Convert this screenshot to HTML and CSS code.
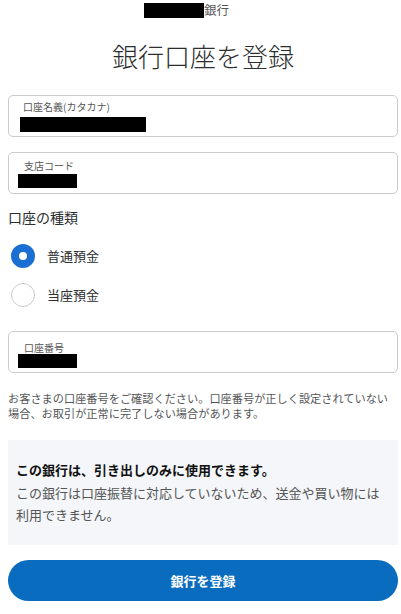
FILE: index.html
```html
<!DOCTYPE html>
<html lang="ja">
<head>
<meta charset="utf-8">
<link rel="stylesheet" href="styles.css">
</head>
<body>
<div class="page">
  <div class="bank"><span class="redact redact-bank"></span>銀行</div>
  <h1 class="title">銀行口座を登録</h1>

  <div class="field field-name">
    <div class="label">口座名義(カタカナ)</div>
    <div class="redact redact-name"></div>
  </div>

  <div class="field field-branch">
    <div class="label">支店コード</div>
    <div class="redact redact-short"></div>
  </div>

  <div class="section-title">口座の種類</div>
  <div class="radios">
    <div class="radio-row">
      <span class="radio radio-on"></span>
      <span class="radio-label">普通預金</span>
    </div>
    <div class="radio-row">
      <span class="radio"></span>
      <span class="radio-label">当座預金</span>
    </div>
  </div>

  <div class="field field-number">
    <div class="label">口座番号</div>
    <div class="redact redact-short"></div>
  </div>

  <p class="note">お客さまの口座番号をご確認ください。口座番号が正しく設定されていない場合、お取引が正常に完了しない場合があります。</p>

  <div class="info">
    <div class="info-head">この銀行は、引き出しのみに使用できます。</div>
    <div class="info-body">この銀行は口座振替に対応していないため、送金や買い物には利用できません。</div>
  </div>

  <button class="submit">銀行を登録</button>
</div>
</body>
</html>
```

FILE: styles.css
```css
* { box-sizing: border-box; }
html, body { margin: 0; padding: 0; background: #fff; overflow: hidden; }
body {
  font-family: "Noto Sans CJK JP", "Noto Sans", sans-serif;
  color: #2c2e2f;
}
.page {
  padding: 0 3px 0 8px;
  display: flex;
  flex-direction: column;
}
.bank {
  margin-top: 2px;
  height: 16px;
  padding-right: 33px;
  display: flex;
  justify-content: center;
  align-items: center;
  font-size: 12.5px;
  line-height: 16px;
  color: #555;
}
.redact { background: #000; }
.redact-bank { width: 60px; height: 15px; }
.title {
  margin: 21px 0 0;
  text-align: center;
  font-size: 26px;
  line-height: 34px;
  font-weight: 300;
  color: #2c2e2f;
}
.field {
  border: 1px solid #c9cbcd;
  border-radius: 5px;
  height: 42px;
  padding: 4px 11px 0 11px;
}
.field-name { margin-top: 22px; }
.field-branch { margin-top: 15px; }
.field-number { margin-top: 24px; }
.label {
  font-size: 10px;
  line-height: 14px;
  color: #555;
  padding-left: 3px;
}
.redact-name { width: 126px; height: 15px; margin-top: 3px; }
.redact-short { width: 59px; height: 14px; margin-top: 2px; }
.field-branch .label, .field-number .label { padding-left: 4px; }
.field-branch .label { margin-top: 2px; }
.field-number .label { margin-top: 5px; }
.field-branch .redact-short { margin-left: -2px; margin-top: 1px; }
.field-number .redact-short { margin-left: -2px; margin-top: -1px; }
.section-title {
  margin-top: 13px;
  font-size: 14px;
  line-height: 20px;
  color: #2c2e2f;
}
.radios {
  margin-top: 17px;
  display: flex;
  flex-direction: column;
  gap: 15px;
}
.radio-row {
  display: flex;
  align-items: center;
  gap: 12px;
  padding-left: 3px;
  height: 24px;
}
.radio {
  width: 24px;
  height: 24px;
  border-radius: 50%;
  border: 1px solid #c9cbcd;
  background: #fff;
  flex: none;
}
.radio-on {
  border: 8px solid #1b6fd2;
}
.radio-label {
  font-size: 13px;
  line-height: 18px;
  color: #2c2e2f;
}
.note {
  margin: 18px 0 0;
  font-size: 11.2px;
  line-height: 15px;
  color: #545657;
}
.info {
  margin-top: 19px;
  background: #f4f6f9;
  padding: 20px 8px 19px;
}
.info-head {
  font-size: 13px;
  line-height: 20px;
  font-weight: 700;
  color: #111;
}
.info-body {
  margin-top: 2px;
  font-size: 13px;
  line-height: 22px;
  color: #555;
}
.submit {
  margin-top: 15px;
  height: 41px;
  border: none;
  border-radius: 21px;
  background: #0a6cbe;
  color: #fff;
  font-family: "Noto Sans CJK JP", "Noto Sans", sans-serif;
  font-size: 13px;
  font-weight: 700;
  width: 100%;
}
```
